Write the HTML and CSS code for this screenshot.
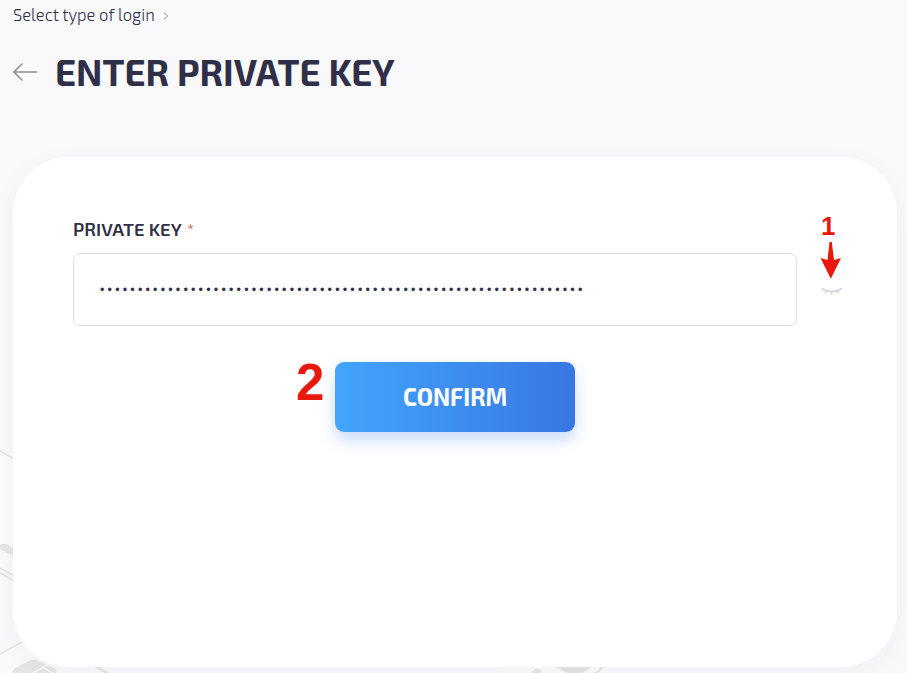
FILE: index.html
```html
<!DOCTYPE html>
<html lang="en">
<head>
<meta charset="utf-8">
<title>Enter private key</title>
<link rel="stylesheet" href="styles.css">
</head>
<body>
<svg class="backdrop" viewBox="0 0 907 673" aria-hidden="true">
  <path d="M0 451L16 460V555L0 543Z" fill="#fbfbfb"/>
  <path d="M0 546V570L16 578V552Z" fill="#fafafa"/>
  <path d="M0 545Q5 542 10 546L18 551V558L0 549Z" fill="#e5e5e5"/>
  <path d="M0 451L16 460M0 568L16 577M0 573L16 582" stroke="#e5e5e5" stroke-width="1.8"/>
  <path d="M0 654L22 642L60 673H0Z" fill="#fafafa"/>
  <path d="M0 654L22 642" stroke="#e5e5e5" stroke-width="1.8"/>
  <path d="M12 673Q13 669 17 667L29 661Q34 658 39 661L54 668Q58 670 56 673Z" fill="#e5e5e5"/>
  <path d="M33 673L49 664M42 667L54 674" stroke="#fafafa" stroke-width="1.5"/>
  <path d="M95 666L109 674" stroke="#e5e5e5" stroke-width="3"/>
  <path d="M500 667H600L592 673H500Z" fill="#fafafa"/>
  <path d="M556 667H592L582 673H567Z" fill="#e3e3e3"/>
  <ellipse cx="537" cy="672" rx="5" ry="3" fill="#e5e5e5"/>
  <path d="M602 667Q600 671 595 674" fill="none" stroke="#e5e5e5" stroke-width="2"/>
</svg>
<main class="page">
  <nav class="breadcrumb">
    <a class="crumb">Select type of login</a>
    <svg class="chevron" viewBox="0 0 6 10"><path d="M1 1.5L4.7 5L1 8.5"/></svg>
  </nav>
  <header class="heading">
    <svg class="back" viewBox="0 0 26 20"><path d="M23.5 10H1.2M9 2L.8 10L9 18"/></svg>
    <h1 class="title">ENTER PRIVATE KEY</h1>
  </header>
  <section class="card">
    <label class="label"><span class="label-text">PRIVATE KEY</span><span class="required">*</span></label>
    <div class="row">
      <div class="field"><span class="dots">••••••••••••••••••••••••••••••••••••••••••••••••••••••••••••••••</span></div>
      <div class="eye-wrap">
        <svg class="eye" viewBox="0 0 22 9"><path d="M.4 1.5Q11 7.6 20.8 1.5M4.6 4V6.2M10.6 5V7.6M16.8 4V6.2"/></svg>
        <span class="mark-one">1</span>
        <svg class="pointer" viewBox="0 0 22 37"><path d="M9.5 0H11.8L14 18L21 16L10.8 36.7L.5 16L7.5 18Z"/></svg>
      </div>
    </div>
    <div class="actions">
      <button class="confirm"><span class="mark-two">2</span><span class="confirm-text">CONFIRM</span></button>
    </div>
  </section>
</main>
</body>
</html>
```
FILE: styles.css
```css
* { box-sizing: border-box; }
body {
  margin: 0;
  height: 673px;
  overflow: hidden;
  background: #f9f9fc;
  color: #2f3048;
  font-family: "Exo 2", Roboto, sans-serif;
}
.backdrop { position: absolute; left: 0; top: 0; width: 907px; height: 673px; }
.page { position: relative; padding: 0 10px 0 13px; }
.breadcrumb { display: flex; align-items: center; gap: 8px; height: 32px; font-size: 17px; font-weight: 300; }
.crumb { width: 142px; margin-top: -5px; white-space: nowrap; transform: scaleX(.975); transform-origin: left; }
.chevron { width: 6px; height: 10px; }
.chevron path { fill: none; stroke: #8d8d94; stroke-width: 1; }
.heading { display: flex; align-items: center; height: 80px; }
.back { width: 26px; height: 20px; margin-right: 15.5px; }
.back path { fill: none; stroke: #8d8d8d; stroke-width: 1.5; stroke-linecap: round; }
.title { margin: -3px 0 0; font-size: 38px; line-height: 44px; font-weight: 700; white-space: nowrap; transform: scaleX(.96); transform-origin: left; }
.card {
  height: 510px;
  margin-top: 45px;
  padding: 60px 54px 0 60px;
  border-radius: 56px;
  background: #fff;
  box-shadow: 0 8px 30px rgba(40, 45, 70, .04);
}
.label { display: flex; height: 26px; align-items: center; font-size: 18.5px; font-weight: 600; }
.label-text { width: 114px; margin-top: -3px; white-space: nowrap; letter-spacing: .05px; }
.required { margin-top: -3px; color: #d8474c; font-size: 16px; font-weight: 400; }
.row { display: flex; align-items: center; justify-content: space-between; margin-top: 10px; }
.field { display: flex; align-items: center; width: 724px; height: 73px; padding-left: 26px; border: 1.5px solid #dedced; border-radius: 7px; }
.dots { font: 12.5px/16px "Liberation Sans", sans-serif; letter-spacing: 3.21px; white-space: nowrap; margin-top: 0; }
.eye-wrap { position: relative; width: 22px; height: 9px; margin-top: 4px; }
.eye { display: block; width: 22px; height: 9px; }
.eye path { fill: none; stroke: #d3d2e8; stroke-width: 1.6; }
.mark-one, .mark-two { position: absolute; color: #e8190c; font-family: "Liberation Sans", sans-serif; font-weight: 700; }
.mark-one { left: 0; top: -76px; font-size: 26px; line-height: 30px; }
.pointer { position: absolute; left: -1px; top: -45px; width: 22px; height: 37px; fill: #e8190c; }
.actions { display: flex; justify-content: center; margin: 36px 0 0 -6px; }
.confirm {
  position: relative;
  width: 240px;
  height: 70px;
  padding: 0 0 2px;
  border: 0;
  border-radius: 9px;
  background: linear-gradient(90deg, #42a5fb, #3877e3);
  box-shadow: 0 8px 16px rgba(56, 119, 227, .28);
  color: #fff;
  font: 700 25.5px/30px "Exo 2", Roboto, sans-serif;
}
.mark-two { left: -39px; top: -8px; font-size: 51px; line-height: 58px; }
.confirm-text { display: inline-block; transform: scaleX(.93); }
```
